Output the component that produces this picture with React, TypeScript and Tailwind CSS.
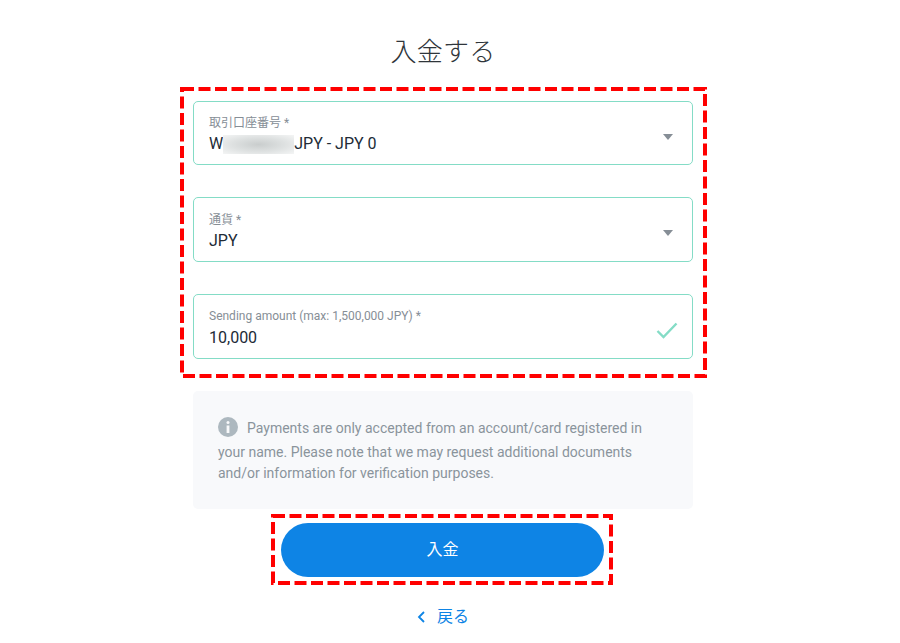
const font = "font-['Roboto','Noto_Sans_CJK_JP',sans-serif]";

function Caret() {
  return (
    <svg width="10" height="6" viewBox="0 0 10 6" className="absolute right-[19px] top-[32px]">
      <path d="M0 0H10L5 6Z" fill="#868e96" />
    </svg>
  );
}

function Field({ label, children, icon, h, pad, gap }: { label: string; children: React.ReactNode; icon: React.ReactNode; h: string; pad: string; gap: string }) {
  return (
    <div className={`relative ${h} ${pad} w-full rounded-[5px] border border-[#84dcc6] bg-white pl-[15px]`}>
      <div className="text-[12px] leading-[16px] text-[#868e96]">{label}</div>
      <div className={`${gap} flex items-center text-[16px] leading-[20px] text-[#212b36]`}>{children}</div>
      {icon}
    </div>
  );
}

function Dashed({ className, w, h }: { className: string; w: number; h: number }) {
  return (
    <svg width={w} height={h} className={`pointer-events-none absolute ${className}`}>
      <rect x="2" y="2" width={w - 4} height={h - 4} fill="none" stroke="#ff0000" strokeWidth="4" strokeDasharray="12 4.5" />
    </svg>
  );
}

export default function App() {
  return (
    <div className={`${font} h-[643px] w-[900px] overflow-hidden bg-white`}>
      <div className="ml-[193px] flex w-[500px] flex-col items-center pt-[32px]">
        <h1 className="text-[26px] font-light leading-[40px] tracking-[0.2px] text-[#2f353a]">入金する</h1>
        <div className="relative mt-[29px] flex w-full flex-col gap-[32px]">
          <Dashed className="left-[-13px] top-[-14px]" w={527} h={291} />
          <Field label="取引口座番号 *" icon={<Caret />} h="h-[64px]" pad="pt-[13px]" gap="mt-[3px]">
            <span>W</span>
            <span className="h-[19px] w-[71px] bg-[radial-gradient(ellipse_at_center,#c9cdcd_0%,#dfe2e2_55%,#f4f5f5_100%)]" />
            <span>JPY - JPY 0</span>
          </Field>
          <Field label="通貨 *" icon={<Caret />} h="h-[65px]" pad="pt-[14px]" gap="mt-[3px]">
            <span>JPY</span>
          </Field>
          <Field
            label="Sending amount (max: 1,500,000 JPY) *"
            h="h-[65px]"
            pad="pt-[13px]"
            gap="mt-[4px]"
            icon={
              <svg width="22" height="17" viewBox="0 0 22 17" className="absolute right-[14px] top-[27px]">
                <path d="M1.5 9L7.5 15L20.5 1.5" fill="none" stroke="#84dcc6" strokeWidth="2.4" />
              </svg>
            }
          >
            <span>10,000</span>
          </Field>
        </div>
        <div className="mt-[32px] h-[118px] w-full rounded-[5px] bg-[#f8f9fb] px-[25px] pt-[26px] text-[14px] leading-[21px] text-[#8a949c]">
          <svg width="20" height="20" viewBox="0 0 20 20" className="mb-[5px] mr-[9px] inline-block align-[-9px]">
            <circle cx="10" cy="10" r="10" fill="#adb8bf" />
            <circle cx="10" cy="5.5" r="1.5" fill="#f8f9fb" />
            <rect x="8.6" y="8.5" width="2.8" height="7.5" fill="#f8f9fb" />
          </svg>
          Payments are only accepted from an account/card registered in your name. Please note that we may request additional documents and/or information for verification purposes.
        </div>
        <div className="relative ml-[88px] mt-[14px] self-start">
          <Dashed className="left-[-10px] top-[-9px]" w={342} h={71} />
          <button className="block h-[54px] w-[323px] rounded-full bg-[#0e84e5] text-[16px] font-normal text-white">入金</button>
        </div>
        <a className="mt-[28px] flex items-center text-[16px] leading-[24px] text-[#0e84e5]">
          <svg width="8" height="12" viewBox="0 0 8 12" className="mr-[12px]">
            <path d="M7 1L2 6L7 11" fill="none" stroke="#0e84e5" strokeWidth="1.8" />
          </svg>
          戻る
        </a>
      </div>
    </div>
  );
}
